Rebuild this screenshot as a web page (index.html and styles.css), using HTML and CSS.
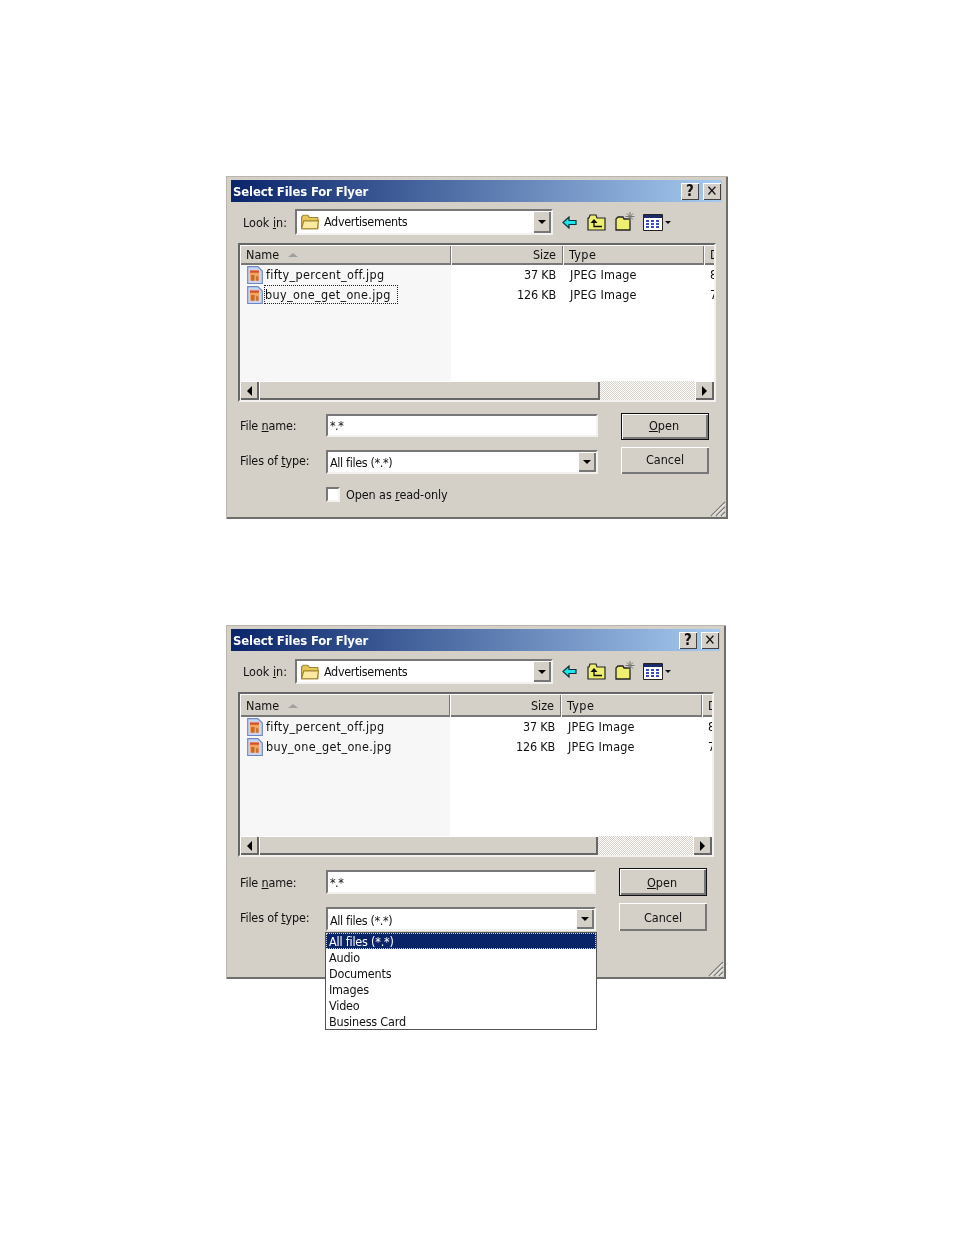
FILE: index.html
```html
<!DOCTYPE html>
<html lang="en">
<head>
	<meta charset="UTF-8">
	<title>Select Files For Flyer</title>
	<link rel="stylesheet" href="styles.css">
</head>
<body>
	<svg class="defs" width="0" height="0">
		<symbol id="i-folder" viewBox="1 1.5 16 13">
			<path d="M1.500 14V3.500L3 2h4l1.500 2H16v10z" fill="#e6c558" stroke="#a08430"/>
			<path d="M1.500 14l2-7h13l-1 7z" fill="#fbe9a0" stroke="#a08430"/>
		</symbol>
		<symbol id="i-back" viewBox="0 0 15 13">
			<path d="M1 6.500L7 1v3.500h7v4H7V12z" fill="#19e6e6" stroke="#10303a" stroke-width="1.200"/>
		</symbol>
		<symbol id="i-up" viewBox="0 0 19 17">
			<path d="M1 16V4h1l1-3h6l1 3h8v12z" fill="#eeee70" stroke="#222" stroke-width="1.200"/>
			<path d="M7 8v4.500h8" fill="none" stroke="#111" stroke-width="1.300"/>
			<path d="M3.500 9L7 5l3.500 4z" fill="#111"/>
		</symbol>
		<symbol id="i-new" viewBox="0 0 22 21">
			<path d="M1 20V9l2-2h5l1 2h6v11z" fill="#eeee70" stroke="#222" stroke-width="1.300"/>
			<path d="M15 2v9M10.500 6.500h9M12 3.500l6 6M18 3.500l-6 6" stroke="#777" fill="none"/>
		</symbol>
		<symbol id="i-views" viewBox="0 0 28 17">
			<path d="M.5.500h19v16H.5z" fill="#fff" stroke="#222"/>
			<path d="M1 1h18v3H1z" fill="#1a2a6a"/>
			<path d="M3 6h3v2H3zM8 6h3v2H8zM13 6h3v2h-3zM3 9h3v2H3zM8 9h3v2H8zM13 9h3v2h-3zM3 12h3v2H3zM8 12h3v2H8zM13 12h3v2h-3z" fill="#3a4cc0"/>
			<path d="M22 7h6l-3 3z" fill="#111"/>
		</symbol>
		<symbol id="i-jpg" viewBox="1 1 14 16">
			<path d="M1.500 1.500h9l4 4v11h-13z" fill="#c8d4f0" stroke="#6f86c2"/>
			<path d="M3.500 5h8v9h-8z" fill="#f0a860"/>
			<path d="M3.500 5h8v2h-8z" fill="#d8502a"/>
			<path d="M4.500 9h3v5h-3zM9 10h2v4H9z" fill="#c86a30"/>
		</symbol>
		<symbol id="i-grip" viewBox="0 0 16 16">
			<path d="M15 1L1 15M15 6l-9 9M15 11l-4 4" stroke="#777" stroke-width="1.200" fill="none"/>
			<path d="M15 2.500L2.500 15M15 7.500L7.500 15M15 12.500L12.500 15" stroke="#fff" fill="none"/>
		</symbol>
	</svg>

	<div class="page">
		<section class="dialog dialog-a">
			<header class="titlebar">
				<span class="title">Select Files For Flyer</span>
				<span class="capbtn">?</span>
				<span class="capbtn">✕</span>
			</header>
			<div class="lookin">
				<label class="lookin-label">Look <u>i</u>n:</label>
				<div class="combo lookin-combo">
					<svg class="folder"><use href="#i-folder"/></svg>
					<span class="combo-text">Advertisements</span>
					<span class="combo-btn"><i class="tri-down"></i></span>
				</div>
				<div class="tools">
					<svg class="t-back"><use href="#i-back"/></svg>
					<svg class="t-up"><use href="#i-up"/></svg>
					<svg class="t-new"><use href="#i-new"/></svg>
					<svg class="t-views"><use href="#i-views"/></svg>
				</div>
			</div>
			<div class="filelist">
				<div class="cols">
					<div class="col-head c-name">Name <i class="tri-sort"></i></div>
					<div class="col-head c-size">Size</div>
					<div class="col-head c-type">Type</div>
					<div class="col-head c-date">D</div>
				</div>
				<div class="rows">
					<div class="row">
						<div class="c-name cell-name"><svg class="jpg"><use href="#i-jpg"/></svg><span class="fname">fifty_percent_off.jpg</span></div>
						<div class="c-size cell-size">37 KB</div>
						<div class="c-type cell-type">JPEG Image</div>
						<div class="c-date cell-date">8</div>
					</div>
					<div class="row">
						<div class="c-name cell-name"><svg class="jpg"><use href="#i-jpg"/></svg><span class="fname focused">buy_one_get_one.jpg</span></div>
						<div class="c-size cell-size">126 KB</div>
						<div class="c-type cell-type">JPEG Image</div>
						<div class="c-date cell-date">7</div>
					</div>
				</div>
				<div class="hscroll">
					<span class="sb-btn"><i class="tri-left"></i></span>
					<span class="sb-thumb"></span>
					<span class="sb-track"></span>
					<span class="sb-btn"><i class="tri-right"></i></span>
				</div>
			</div>
			<div class="form">
				<label class="flabel">File <u>n</u>ame:</label>
				<div class="field field-name">*.*</div>
				<div class="btn btn-default"><span><u>O</u>pen</span></div>
				<label class="flabel">Files of <u>t</u>ype:</label>
				<div class="combo field-type">
					<span class="combo-text">All files (*.*)</span>
					<span class="combo-btn"><i class="tri-down"></i></span>
				</div>
				<div class="btn">Cancel</div>
				<div class="readonly">
					<span class="check"></span>
					<span>Open as <u>r</u>ead-only</span>
				</div>
			</div>
			<svg class="grip"><use href="#i-grip"/></svg>
		</section>

		<section class="dialog dialog-b">
			<header class="titlebar">
				<span class="title">Select Files For Flyer</span>
				<span class="capbtn">?</span>
				<span class="capbtn">✕</span>
			</header>
			<div class="lookin">
				<label class="lookin-label">Look <u>i</u>n:</label>
				<div class="combo lookin-combo">
					<svg class="folder"><use href="#i-folder"/></svg>
					<span class="combo-text">Advertisements</span>
					<span class="combo-btn"><i class="tri-down"></i></span>
				</div>
				<div class="tools">
					<svg class="t-back"><use href="#i-back"/></svg>
					<svg class="t-up"><use href="#i-up"/></svg>
					<svg class="t-new"><use href="#i-new"/></svg>
					<svg class="t-views"><use href="#i-views"/></svg>
				</div>
			</div>
			<div class="filelist">
				<div class="cols">
					<div class="col-head c-name">Name <i class="tri-sort"></i></div>
					<div class="col-head c-size">Size</div>
					<div class="col-head c-type">Type</div>
					<div class="col-head c-date">D</div>
				</div>
				<div class="rows">
					<div class="row">
						<div class="c-name cell-name"><svg class="jpg"><use href="#i-jpg"/></svg><span class="fname">fifty_percent_off.jpg</span></div>
						<div class="c-size cell-size">37 KB</div>
						<div class="c-type cell-type">JPEG Image</div>
						<div class="c-date cell-date">8</div>
					</div>
					<div class="row">
						<div class="c-name cell-name"><svg class="jpg"><use href="#i-jpg"/></svg><span class="fname">buy_one_get_one.jpg</span></div>
						<div class="c-size cell-size">126 KB</div>
						<div class="c-type cell-type">JPEG Image</div>
						<div class="c-date cell-date">7</div>
					</div>
				</div>
				<div class="hscroll">
					<span class="sb-btn"><i class="tri-left"></i></span>
					<span class="sb-thumb"></span>
					<span class="sb-track"></span>
					<span class="sb-btn"><i class="tri-right"></i></span>
				</div>
			</div>
			<div class="form">
				<label class="flabel">File <u>n</u>ame:</label>
				<div class="field field-name">*.*</div>
				<div class="btn btn-default"><span><u>O</u>pen</span></div>
				<label class="flabel">Files of <u>t</u>ype:</label>
				<div class="combo field-type">
					<span class="combo-text">All files (*.*)</span>
					<span class="combo-btn"><i class="tri-down"></i></span>
					<ul class="droplist">
						<li class="selected">All files (*.*)</li>
						<li>Audio</li>
						<li>Documents</li>
						<li>Images</li>
						<li>Video</li>
						<li>Business Card</li>
					</ul>
				</div>
				<div class="btn">Cancel</div>
			</div>
			<svg class="grip"><use href="#i-grip"/></svg>
		</section>
	</div>
</body>
</html>
```

FILE: styles.css
```css
* {
  box-sizing: border-box;
}

body {
  margin: 0;
  background: #fff;
  color: #111;
  font-family: "DejaVu Sans Condensed", "DejaVu Sans", sans-serif;
  font-stretch: condensed;
  font-size: 12.5px;
}

.defs {
  position: absolute;
}

.page {
  min-height: 100vh;
  padding: 176px 0 0 226px;
  display: flex;
  flex-direction: column;
  gap: 106px;
  filter: blur(0.4px);
}

.dialog {
  position: relative;
  flex: none;
  background: #d4d0c8;
  padding: 4px 6px 0 5px;
  box-shadow: inset 1px 1px 0 #b9b6ae, inset -2px -2px 0 #6e6e6a;
}
.dialog-a {
  width: 502px;
  height: 343px;
  --name-w: 211px;
  --size-w: 112px;
}
.dialog-b {
  width: 500px;
  height: 354px;
  --name-w: 210px;
  --size-w: 111px;
}

.titlebar {
  height: 22px;
  display: flex;
  align-items: center;
  gap: 4px;
  padding: 0 1px 0 2px;
  background: linear-gradient(90deg, #0a246a, #a6caf0);
}
.title {
  flex: 1;
  color: #fff;
  font-weight: bold;
  font-size: 13px;
  letter-spacing: -0.15px;
}
.capbtn {
  width: 18px;
  height: 17px;
  background: #d4d0c8;
  box-shadow: inset 1px 1px 0 #fff, inset -1px -1px 0 #404040;
  color: #111;
  font-weight: bold;
  font-size: 15px;
  line-height: 17px;
  text-align: center;
}

.lookin {
  display: flex;
  align-items: center;
  height: 26px;
  margin-top: 7px;
  padding-left: 12px;
}
.dialog-b .lookin {
  height: 25px;
  margin-top: 8px;
}
.lookin-label {
  width: 52px;
}

.combo,
.field {
  position: relative;
  display: flex;
  align-items: center;
  background: #fff;
  border: 2px solid;
  border-color: #777 #f4f2ee #f4f2ee #777;
}
.lookin-combo {
  width: 258px;
  height: 100%;
  padding-left: 4px;
}
.dialog-a .lookin-combo .combo-text {
  padding-bottom: 2px;
}
.combo-text {
  flex: 1;
  letter-spacing: -0.36px;
}
.folder {
  width: 18px;
  height: 16px;
  margin-right: 5px;
}
.combo-btn {
  width: 18px;
  height: 100%;
  display: flex;
  align-items: center;
  justify-content: center;
  background: #d4d0c8;
  box-shadow: inset 1px 1px 0 #fff, inset -2px -2px 0 #777;
}
.tri-down {
  border: 4px solid transparent;
  border-top: 4px solid #000;
  border-bottom: 0;
}

.tools {
  display: flex;
  align-items: center;
  margin-left: 9px;
}
.t-back {
  width: 15px;
  height: 13px;
  margin-right: 10px;
}
.t-up {
  width: 19px;
  height: 17px;
  margin-right: 9px;
}
.t-new {
  width: 22px;
  height: 21px;
  margin: -4px 6px 0 0;
}
.t-views {
  width: 28px;
  height: 17px;
}

.filelist {
  display: flex;
  flex-direction: column;
  margin: 8px 0 0 7px;
  border: 2px solid;
  border-color: #666 #f4f2ee #f4f2ee #666;
  background: #fff;
  overflow: hidden;
}
.dialog-a .filelist {
  width: 478px;
  height: 159px;
}
.dialog-b .filelist {
  width: 476px;
  height: 165px;
}

.cols,
.row {
  display: flex;
}
.col-head {
  height: 20px;
  line-height: 20px;
  padding: 0 6px;
  background: #d4d0c8;
  box-shadow: inset 1px 1px 0 #fff, inset -1px -2px 0 #777;
  white-space: nowrap;
}
.dialog-b .col-head {
  height: 23px;
  line-height: 23px;
}
.col-head.c-type {
  letter-spacing: 0.4px;
}
.c-name {
  width: var(--name-w);
  flex: none;
}
.c-size {
  width: var(--size-w);
  flex: none;
  text-align: right;
  padding-right: 7px;
}
.cell-size {
  letter-spacing: -0.2px;
}
.dialog-b .cell-size {
  padding-right: 6px;
}
.c-type {
  width: 141px;
  flex: none;
}
.c-date {
  flex: 1;
  overflow: hidden;
  padding-left: 6px;
}
.tri-sort {
  display: inline-block;
  margin-left: 5px;
  vertical-align: 2px;
  border: 5px solid transparent;
  border-top: 0;
  border-bottom: 4px solid #a0a0a0;
}

.rows {
  flex: 1;
  background: linear-gradient(90deg, #f7f7f7 var(--name-w), #fff var(--name-w));
}
.row {
  height: 20px;
  line-height: 20px;
}
.cell-name {
  display: flex;
  align-items: center;
  padding-left: 7px;
}
.jpg {
  width: 16px;
  height: 18px;
  margin-right: 2px;
  flex: none;
}
.fname {
  padding: 0 2px 0 1px;
  letter-spacing: 0.35px;
}
.focused {
  border: 1px dotted #222;
  line-height: 17px;
  margin: -2px 0 0 -1px;
  padding: 0 6px 0 0;
}
.cell-type {
  padding-left: 7px;
  letter-spacing: 0.2px;
}

.hscroll {
  display: flex;
  height: 19px;
}
.sb-btn {
  width: 19px;
  display: flex;
  align-items: center;
  justify-content: center;
  background: #d4d0c8;
  box-shadow: inset 1px 1px 0 #fff, inset -2px -2px 0 #666;
}
.sb-thumb {
  width: 341px;
  background: #d4d0c8;
  box-shadow: inset 1px 1px 0 #fff, inset -2px -2px 0 #666;
}
.dialog-b .sb-thumb {
  width: 339px;
}
.sb-track {
  flex: 1;
  background: repeating-conic-gradient(#d4d0c8 0 25%, #fff 0 50%) 0 0 / 2px 2px;
}
.tri-left {
  border: 5px solid transparent;
  border-left: 0;
  border-right: 5px solid #000;
}
.tri-right {
  border: 5px solid transparent;
  border-right: 0;
  border-left: 5px solid #000;
}

.form {
  display: grid;
  grid-template-columns: 86px 272px 111px;
  row-gap: 7px;
  grid-auto-rows: 27px;
  align-items: center;
  margin: 11px 0 0 9px;
}
.dialog-b .form {
  grid-template-columns: 86px 270px 111px;
  grid-auto-rows: 28px;
}
.flabel {
  letter-spacing: -0.15px;
}
.dialog-a .flabel:first-child {
  margin-top: -3px;
}
.field-name {
  height: 23px;
  padding-left: 2px;
  align-self: start;
  margin-top: 1px;
  letter-spacing: -0.5px;
}
.dialog-b .field-name {
  height: 24px;
  margin-top: 2px;
}
.field-type {
  height: 24px;
  padding-left: 2px;
  align-self: end;
}
.dialog-b .field-type .combo-text {
  padding-top: 2px;
}
.btn {
  height: 100%;
  margin-left: 23px;
  display: flex;
  align-items: center;
  justify-content: center;
  background: #d4d0c8;
  box-shadow: inset 1px 1px 0 #fff, inset -2px -2px 0 #777;
}
.dialog-a .btn {
  padding-bottom: 2px;
}
.btn-default {
  border: 1px solid #111;
  padding-right: 2px;
}
.readonly {
  grid-column: 2;
  display: flex;
  align-items: center;
  gap: 6px;
  margin-top: -1px;
  letter-spacing: -0.1px;
}
.check {
  width: 14px;
  height: 15px;
  background: #fff;
  border: 2px solid;
  border-color: #777 #f4f2ee #f4f2ee #777;
}

.droplist {
  position: absolute;
  z-index: 2;
  top: 23px;
  left: -3px;
  width: 272px;
  margin: 0;
  padding: 0;
  list-style: none;
  background: #fff;
  border: 1px solid #555;
  letter-spacing: -0.2px;
}
.droplist li {
  height: 16px;
  line-height: 16px;
  padding: 1px 0 0 3px;
}
.droplist .selected {
  background: #0a246a;
  color: #fff;
  outline: 1px dotted #d4d0c8;
  outline-offset: -1px;
}

.grip {
  position: absolute;
  right: 2px;
  bottom: 2px;
  width: 16px;
  height: 16px;
}
```
